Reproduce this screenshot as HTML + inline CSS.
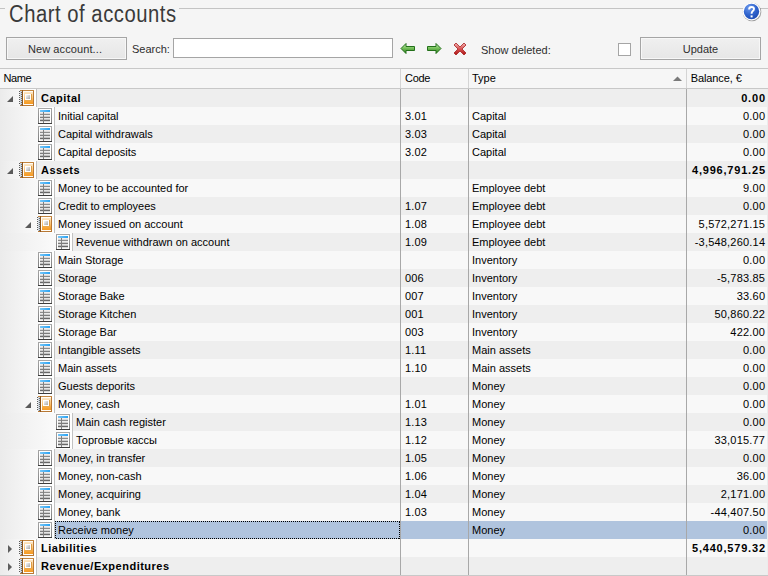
<!DOCTYPE html>
<html><head><meta charset="utf-8">
<style>
html,body{margin:0;padding:0;}
body{width:768px;height:576px;overflow:hidden;position:relative;background:#f5f5f5;font-family:"Liberation Sans",sans-serif;font-size:11px;color:#000;}
.abs{position:absolute;}
.title{position:absolute;left:9px;top:0px;font-size:23px;color:#3a3a3a;white-space:nowrap;line-height:28px;transform:scaleX(0.88);transform-origin:0 0;letter-spacing:0.6px;}
.hl{position:absolute;top:8px;height:1px;background:#c4c4c4;}
.btn{position:absolute;top:37px;height:21px;border:1px solid #a5a5a5;background:linear-gradient(#f0f0f0,#e6e6e6);box-shadow:inset 0 0 0 1px #f7f7f7;color:#2e2e2e;text-align:center;line-height:23px;}
.lbl{position:absolute;color:#2e2e2e;line-height:14px;white-space:nowrap;}
.inp{position:absolute;left:173px;top:38px;width:218px;height:18px;border:1px solid #a5a5a5;background:#fff;}
.chk{position:absolute;left:618px;top:43px;width:11px;height:11px;border:1px solid #a5a5a5;background:#fff;}
.hdr{position:absolute;left:0;top:68px;width:768px;height:19px;border-top:1px solid #c8c8c8;border-bottom:1px solid #c8c8c8;background:#f6f6f6;}
.hdr .t{position:absolute;top:-1px;line-height:20px;}
.hv{position:absolute;top:0;width:1px;height:19px;background:#d4d4d4;}
.r{position:absolute;left:0;width:768px;height:18px;}
.r .t{position:absolute;top:0;line-height:18px;white-space:nowrap;}
.r.b .t{font-weight:bold;letter-spacing:0.5px;}
.r .bal{right:2.8px;letter-spacing:0.2px;}
.r .code{letter-spacing:0.15px;}
.r.b .bal{letter-spacing:0.8px;right:2.2px;}
.ind{position:absolute;left:0;top:0;height:18px;background:linear-gradient(90deg,#ebebeb,#ffffff);}
.isep{position:absolute;top:0;width:1px;height:18px;background:#c2c2c2;}
.tri{position:absolute;top:7px;}
.ico{position:absolute;}
.vl{position:absolute;top:0;width:1px;height:18px;background:#a8a8a8;}
.selc{position:absolute;top:0;height:18px;background:#b0c4de;}
.dh{position:absolute;height:1px;background:repeating-linear-gradient(90deg,#000 0 1px,transparent 1px 2px);}
.dv{position:absolute;width:1px;height:18px;background:repeating-linear-gradient(180deg,#000 0 1px,transparent 1px 2px);}
.selr{position:absolute;top:0;right:0;height:18px;background:#b0c4de;}
</style></head><body>
<svg width="0" height="0" style="position:absolute">
<defs>
<linearGradient id="bk" x1="0" y1="0" x2="0" y2="1"><stop offset="0" stop-color="#fde8c8"/><stop offset="0.5" stop-color="#fbc274"/><stop offset="0.75" stop-color="#f8a83c"/><stop offset="1" stop-color="#f59a22"/></linearGradient>
<linearGradient id="lb" x1="0" y1="0" x2="1" y2="1"><stop offset="0" stop-color="#f8f8f8"/><stop offset="1" stop-color="#a8a8a8"/></linearGradient>
<linearGradient id="tbd" x1="0" y1="0" x2="0" y2="1"><stop offset="0" stop-color="#a8a8a8"/><stop offset="1" stop-color="#7a7a7a"/></linearGradient><linearGradient id="tbb" x1="0" y1="0" x2="1" y2="0"><stop offset="0" stop-color="#76c7f9"/><stop offset="1" stop-color="#28a2f3"/></linearGradient>
</defs></svg>

<div class="hl" style="left:0;width:5px"></div>
<div class="title">Chart of accounts</div>
<div class="hl" style="left:179px;width:570px"></div>
<div class="hl" style="left:755px;width:13px"></div>
<svg class="abs" style="left:741px;top:1px" width="22" height="22">
<defs><radialGradient id="hg" cx="0.35" cy="0.25" r="0.8"><stop offset="0" stop-color="#6a98ec"/><stop offset="0.6" stop-color="#2e62cc"/><stop offset="1" stop-color="#1d4cb4"/></radialGradient></defs>
<circle cx="11" cy="11" r="9.3" fill="#5a5a5a" opacity="0.55"/>
<circle cx="10.5" cy="10.5" r="9" fill="#ffffff"/>
<circle cx="10.5" cy="10.5" r="7.7" fill="url(#hg)"/>
<path d="M8.1 8.5C8.1 6.7 9.2 6 10.6 6C12 6 13 6.9 13 8.1C13 9.3 12.2 9.8 11.4 10.4C10.8 10.9 10.6 11.4 10.6 12.7" fill="none" stroke="#fff" stroke-width="1.9"/>
<rect x="9.6" y="14.4" width="2" height="2" fill="#fff"/>
</svg>

<div class="btn" style="left:6px;width:119px;text-indent:-3px;letter-spacing:0.1px">New account...</div>
<div class="lbl" style="left:132px;top:42px">Search:</div>
<div class="inp"></div>
<svg class="abs" style="left:400px;top:42px" width="16" height="13">
<defs><linearGradient id="ag" x1="0" y1="0" x2="0" y2="1"><stop offset="0" stop-color="#d8f4c8"/><stop offset="0.45" stop-color="#78c25c"/><stop offset="1" stop-color="#2a7c1c"/></linearGradient></defs>
<path d="M1 6.5L6 1.5V4.5H14.5V8.5H6V11.5Z" fill="url(#ag)" stroke="#23701a" stroke-width="1" stroke-linejoin="round"/>
</svg>
<svg class="abs" style="left:426px;top:42px" width="16" height="13">
<path d="M15 6.5L10 1.5V4.5H1.5V8.5H10V11.5Z" fill="url(#ag)" stroke="#23701a" stroke-width="1" stroke-linejoin="round"/>
</svg>
<svg class="abs" style="left:453px;top:42px" width="14" height="14">
<defs><linearGradient id="xg" x1="0" y1="0" x2="0" y2="1"><stop offset="0" stop-color="#f4b8b8"/><stop offset="0.5" stop-color="#d65050"/><stop offset="1" stop-color="#aa1414"/></linearGradient></defs>
<path d="M1 3L3 1L7 5L11 1L13 3L9 7L13 11L11 13L7 9L3 13L1 11L5 7Z" fill="url(#xg)" stroke="#a82020" stroke-width="0.8" stroke-linejoin="round"/>
</svg>
<div class="lbl" style="left:481px;top:43px">Show deleted:</div>
<div class="chk"></div>
<div class="btn" style="left:640px;width:119px">Update</div>

<div class="hdr">
<div class="t" style="left:3.5px;letter-spacing:-0.4px">Name</div>
<div class="hv" style="left:400px"></div>
<div class="t" style="left:405px;letter-spacing:-0.3px">Code</div>
<div class="hv" style="left:468px"></div>
<div class="t" style="left:472px">Type</div>
<svg class="abs" style="left:673px;top:7px" width="9" height="6"><path d="M0 5L4.5 0.5L9 5Z" fill="#7a7a7a"/></svg>
<div class="hv" style="left:686px"></div>
<div class="t" style="left:690.7px;letter-spacing:-0.1px">Balance, €</div>
</div>

<div class="r b" style="top:89px;background:#eeeeee"><div class="ind" style="width:36px"></div><div class="isep" style="left:36px"></div><svg class="tri" style="left:7px" width="6" height="6"><path d="M6 0V6H0Z" fill="#5a5a5a"/></svg><svg class="ico" style="left:19px;top:1px" width="16" height="16" viewBox="0 0 16 16" shape-rendering="crispEdges"><rect x="1" y="0" width="14" height="16" fill="#b87835"/><rect x="1" y="0" width="14" height="1" fill="#c4863f"/><rect x="1" y="1" width="2" height="14" fill="#cdd5dd"/><rect x="3" y="0" width="1" height="16" fill="#8e561c"/><rect x="4" y="1" width="10" height="14" fill="#fffcf6"/><rect x="5" y="2" width="9" height="12" fill="url(#bk)"/><rect x="6" y="4" width="6" height="6" fill="#ffffff"/><rect x="7" y="5" width="4" height="4" fill="url(#lb)"/><rect x="12" y="4" width="1" height="7" fill="#dc9c44"/><rect x="6" y="10" width="7" height="1" fill="#eaa84a"/><g fill="#5a5a5a"><rect x="0" y="1" width="1" height="1"/><rect x="0" y="3" width="1" height="1"/><rect x="0" y="5" width="1" height="1"/><rect x="0" y="7" width="1" height="1"/><rect x="0" y="9" width="1" height="1"/><rect x="0" y="11" width="1" height="1"/><rect x="0" y="13" width="1" height="1"/></g><g fill="#666c72"><rect x="2" y="2" width="1" height="1"/><rect x="2" y="4" width="1" height="1"/><rect x="2" y="6" width="1" height="1"/><rect x="2" y="8" width="1" height="1"/><rect x="2" y="10" width="1" height="1"/><rect x="2" y="12" width="1" height="1"/><rect x="2" y="14" width="1" height="1"/></g></svg><div class="t n" style="left:41px">Capital</div><div class="t bal">0.00</div><div class="vl" style="left:400px"></div><div class="vl" style="left:468px"></div><div class="vl" style="left:686px"></div></div>
<div class="r" style="top:107px;background:#f8f8f8"><div class="ind" style="width:54px"></div><div class="isep" style="left:54px"></div><svg class="ico" style="left:38px;top:1px" width="14" height="16" viewBox="0 0 14 16" shape-rendering="crispEdges"><rect x="0" y="0" width="14" height="16" fill="url(#tbd)"/><rect x="0" y="15" width="14" height="1" fill="#3c3c3c"/><rect x="1" y="1" width="12" height="14" fill="#ffffff"/><rect x="2" y="2" width="10" height="2" fill="url(#tbb)"/><rect x="2" y="4" width="10" height="1" fill="#f2ecea"/><rect x="2" y="5" width="10" height="1" fill="#d9d9d9"/><rect x="2" y="6" width="10" height="1" fill="#8c8c8c"/><rect x="2" y="7" width="10" height="1" fill="#ececec"/><rect x="2" y="8" width="10" height="1" fill="#cdcdcd"/><rect x="2" y="9" width="10" height="1" fill="#7c7c7c"/><rect x="2" y="10" width="10" height="1" fill="#e4e4e4"/><rect x="2" y="11" width="10" height="1" fill="#c2c2c2"/><rect x="2" y="12" width="10" height="1" fill="#686868"/><rect x="2" y="13" width="10" height="1" fill="#dadada"/><rect x="2" y="14" width="10" height="1" fill="#f8f8f8"/><rect x="5" y="4" width="1" height="11" fill="#808080"/></svg><div class="t n" style="left:58px">Initial capital</div><div class="t code" style="left:405px">3.01</div><div class="t" style="left:472px">Capital</div><div class="t bal">0.00</div><div class="vl" style="left:400px"></div><div class="vl" style="left:468px"></div><div class="vl" style="left:686px"></div></div>
<div class="r" style="top:125px;background:#eeeeee"><div class="ind" style="width:54px"></div><div class="isep" style="left:54px"></div><svg class="ico" style="left:38px;top:1px" width="14" height="16" viewBox="0 0 14 16" shape-rendering="crispEdges"><rect x="0" y="0" width="14" height="16" fill="url(#tbd)"/><rect x="0" y="15" width="14" height="1" fill="#3c3c3c"/><rect x="1" y="1" width="12" height="14" fill="#ffffff"/><rect x="2" y="2" width="10" height="2" fill="url(#tbb)"/><rect x="2" y="4" width="10" height="1" fill="#f2ecea"/><rect x="2" y="5" width="10" height="1" fill="#d9d9d9"/><rect x="2" y="6" width="10" height="1" fill="#8c8c8c"/><rect x="2" y="7" width="10" height="1" fill="#ececec"/><rect x="2" y="8" width="10" height="1" fill="#cdcdcd"/><rect x="2" y="9" width="10" height="1" fill="#7c7c7c"/><rect x="2" y="10" width="10" height="1" fill="#e4e4e4"/><rect x="2" y="11" width="10" height="1" fill="#c2c2c2"/><rect x="2" y="12" width="10" height="1" fill="#686868"/><rect x="2" y="13" width="10" height="1" fill="#dadada"/><rect x="2" y="14" width="10" height="1" fill="#f8f8f8"/><rect x="5" y="4" width="1" height="11" fill="#808080"/></svg><div class="t n" style="left:58px">Capital withdrawals</div><div class="t code" style="left:405px">3.03</div><div class="t" style="left:472px">Capital</div><div class="t bal">0.00</div><div class="vl" style="left:400px"></div><div class="vl" style="left:468px"></div><div class="vl" style="left:686px"></div></div>
<div class="r" style="top:143px;background:#f8f8f8"><div class="ind" style="width:54px"></div><div class="isep" style="left:54px"></div><svg class="ico" style="left:38px;top:1px" width="14" height="16" viewBox="0 0 14 16" shape-rendering="crispEdges"><rect x="0" y="0" width="14" height="16" fill="url(#tbd)"/><rect x="0" y="15" width="14" height="1" fill="#3c3c3c"/><rect x="1" y="1" width="12" height="14" fill="#ffffff"/><rect x="2" y="2" width="10" height="2" fill="url(#tbb)"/><rect x="2" y="4" width="10" height="1" fill="#f2ecea"/><rect x="2" y="5" width="10" height="1" fill="#d9d9d9"/><rect x="2" y="6" width="10" height="1" fill="#8c8c8c"/><rect x="2" y="7" width="10" height="1" fill="#ececec"/><rect x="2" y="8" width="10" height="1" fill="#cdcdcd"/><rect x="2" y="9" width="10" height="1" fill="#7c7c7c"/><rect x="2" y="10" width="10" height="1" fill="#e4e4e4"/><rect x="2" y="11" width="10" height="1" fill="#c2c2c2"/><rect x="2" y="12" width="10" height="1" fill="#686868"/><rect x="2" y="13" width="10" height="1" fill="#dadada"/><rect x="2" y="14" width="10" height="1" fill="#f8f8f8"/><rect x="5" y="4" width="1" height="11" fill="#808080"/></svg><div class="t n" style="left:58px">Capital deposits</div><div class="t code" style="left:405px">3.02</div><div class="t" style="left:472px">Capital</div><div class="t bal">0.00</div><div class="vl" style="left:400px"></div><div class="vl" style="left:468px"></div><div class="vl" style="left:686px"></div></div>
<div class="r b" style="top:161px;background:#eeeeee"><div class="ind" style="width:36px"></div><div class="isep" style="left:36px"></div><svg class="tri" style="left:7px" width="6" height="6"><path d="M6 0V6H0Z" fill="#5a5a5a"/></svg><svg class="ico" style="left:19px;top:1px" width="16" height="16" viewBox="0 0 16 16" shape-rendering="crispEdges"><rect x="1" y="0" width="14" height="16" fill="#b87835"/><rect x="1" y="0" width="14" height="1" fill="#c4863f"/><rect x="1" y="1" width="2" height="14" fill="#cdd5dd"/><rect x="3" y="0" width="1" height="16" fill="#8e561c"/><rect x="4" y="1" width="10" height="14" fill="#fffcf6"/><rect x="5" y="2" width="9" height="12" fill="url(#bk)"/><rect x="6" y="4" width="6" height="6" fill="#ffffff"/><rect x="7" y="5" width="4" height="4" fill="url(#lb)"/><rect x="12" y="4" width="1" height="7" fill="#dc9c44"/><rect x="6" y="10" width="7" height="1" fill="#eaa84a"/><g fill="#5a5a5a"><rect x="0" y="1" width="1" height="1"/><rect x="0" y="3" width="1" height="1"/><rect x="0" y="5" width="1" height="1"/><rect x="0" y="7" width="1" height="1"/><rect x="0" y="9" width="1" height="1"/><rect x="0" y="11" width="1" height="1"/><rect x="0" y="13" width="1" height="1"/></g><g fill="#666c72"><rect x="2" y="2" width="1" height="1"/><rect x="2" y="4" width="1" height="1"/><rect x="2" y="6" width="1" height="1"/><rect x="2" y="8" width="1" height="1"/><rect x="2" y="10" width="1" height="1"/><rect x="2" y="12" width="1" height="1"/><rect x="2" y="14" width="1" height="1"/></g></svg><div class="t n" style="left:41px">Assets</div><div class="t bal">4,996,791.25</div><div class="vl" style="left:400px"></div><div class="vl" style="left:468px"></div><div class="vl" style="left:686px"></div></div>
<div class="r" style="top:179px;background:#f8f8f8"><div class="ind" style="width:54px"></div><div class="isep" style="left:54px"></div><svg class="ico" style="left:38px;top:1px" width="14" height="16" viewBox="0 0 14 16" shape-rendering="crispEdges"><rect x="0" y="0" width="14" height="16" fill="url(#tbd)"/><rect x="0" y="15" width="14" height="1" fill="#3c3c3c"/><rect x="1" y="1" width="12" height="14" fill="#ffffff"/><rect x="2" y="2" width="10" height="2" fill="url(#tbb)"/><rect x="2" y="4" width="10" height="1" fill="#f2ecea"/><rect x="2" y="5" width="10" height="1" fill="#d9d9d9"/><rect x="2" y="6" width="10" height="1" fill="#8c8c8c"/><rect x="2" y="7" width="10" height="1" fill="#ececec"/><rect x="2" y="8" width="10" height="1" fill="#cdcdcd"/><rect x="2" y="9" width="10" height="1" fill="#7c7c7c"/><rect x="2" y="10" width="10" height="1" fill="#e4e4e4"/><rect x="2" y="11" width="10" height="1" fill="#c2c2c2"/><rect x="2" y="12" width="10" height="1" fill="#686868"/><rect x="2" y="13" width="10" height="1" fill="#dadada"/><rect x="2" y="14" width="10" height="1" fill="#f8f8f8"/><rect x="5" y="4" width="1" height="11" fill="#808080"/></svg><div class="t n" style="left:58px">Money to be accounted for</div><div class="t" style="left:472px">Employee debt</div><div class="t bal">9.00</div><div class="vl" style="left:400px"></div><div class="vl" style="left:468px"></div><div class="vl" style="left:686px"></div></div>
<div class="r" style="top:197px;background:#eeeeee"><div class="ind" style="width:54px"></div><div class="isep" style="left:54px"></div><svg class="ico" style="left:38px;top:1px" width="14" height="16" viewBox="0 0 14 16" shape-rendering="crispEdges"><rect x="0" y="0" width="14" height="16" fill="url(#tbd)"/><rect x="0" y="15" width="14" height="1" fill="#3c3c3c"/><rect x="1" y="1" width="12" height="14" fill="#ffffff"/><rect x="2" y="2" width="10" height="2" fill="url(#tbb)"/><rect x="2" y="4" width="10" height="1" fill="#f2ecea"/><rect x="2" y="5" width="10" height="1" fill="#d9d9d9"/><rect x="2" y="6" width="10" height="1" fill="#8c8c8c"/><rect x="2" y="7" width="10" height="1" fill="#ececec"/><rect x="2" y="8" width="10" height="1" fill="#cdcdcd"/><rect x="2" y="9" width="10" height="1" fill="#7c7c7c"/><rect x="2" y="10" width="10" height="1" fill="#e4e4e4"/><rect x="2" y="11" width="10" height="1" fill="#c2c2c2"/><rect x="2" y="12" width="10" height="1" fill="#686868"/><rect x="2" y="13" width="10" height="1" fill="#dadada"/><rect x="2" y="14" width="10" height="1" fill="#f8f8f8"/><rect x="5" y="4" width="1" height="11" fill="#808080"/></svg><div class="t n" style="left:58px">Credit to employees</div><div class="t code" style="left:405px">1.07</div><div class="t" style="left:472px">Employee debt</div><div class="t bal">0.00</div><div class="vl" style="left:400px"></div><div class="vl" style="left:468px"></div><div class="vl" style="left:686px"></div></div>
<div class="r" style="top:215px;background:#f8f8f8"><div class="ind" style="width:54px"></div><div class="isep" style="left:54px"></div><svg class="tri" style="left:25px" width="6" height="6"><path d="M6 0V6H0Z" fill="#5a5a5a"/></svg><svg class="ico" style="left:37px;top:1px" width="16" height="16" viewBox="0 0 16 16" shape-rendering="crispEdges"><rect x="1" y="0" width="14" height="16" fill="#b87835"/><rect x="1" y="0" width="14" height="1" fill="#c4863f"/><rect x="1" y="1" width="2" height="14" fill="#cdd5dd"/><rect x="3" y="0" width="1" height="16" fill="#8e561c"/><rect x="4" y="1" width="10" height="14" fill="#fffcf6"/><rect x="5" y="2" width="9" height="12" fill="url(#bk)"/><rect x="6" y="4" width="6" height="6" fill="#ffffff"/><rect x="7" y="5" width="4" height="4" fill="url(#lb)"/><rect x="12" y="4" width="1" height="7" fill="#dc9c44"/><rect x="6" y="10" width="7" height="1" fill="#eaa84a"/><g fill="#5a5a5a"><rect x="0" y="1" width="1" height="1"/><rect x="0" y="3" width="1" height="1"/><rect x="0" y="5" width="1" height="1"/><rect x="0" y="7" width="1" height="1"/><rect x="0" y="9" width="1" height="1"/><rect x="0" y="11" width="1" height="1"/><rect x="0" y="13" width="1" height="1"/></g><g fill="#666c72"><rect x="2" y="2" width="1" height="1"/><rect x="2" y="4" width="1" height="1"/><rect x="2" y="6" width="1" height="1"/><rect x="2" y="8" width="1" height="1"/><rect x="2" y="10" width="1" height="1"/><rect x="2" y="12" width="1" height="1"/><rect x="2" y="14" width="1" height="1"/></g></svg><div class="t n" style="left:58px">Money issued on account</div><div class="t code" style="left:405px">1.08</div><div class="t" style="left:472px">Employee debt</div><div class="t bal">5,572,271.15</div><div class="vl" style="left:400px"></div><div class="vl" style="left:468px"></div><div class="vl" style="left:686px"></div></div>
<div class="r" style="top:233px;background:#eeeeee"><div class="ind" style="width:72px"></div><div class="isep" style="left:72px"></div><svg class="ico" style="left:56px;top:1px" width="14" height="16" viewBox="0 0 14 16" shape-rendering="crispEdges"><rect x="0" y="0" width="14" height="16" fill="url(#tbd)"/><rect x="0" y="15" width="14" height="1" fill="#3c3c3c"/><rect x="1" y="1" width="12" height="14" fill="#ffffff"/><rect x="2" y="2" width="10" height="2" fill="url(#tbb)"/><rect x="2" y="4" width="10" height="1" fill="#f2ecea"/><rect x="2" y="5" width="10" height="1" fill="#d9d9d9"/><rect x="2" y="6" width="10" height="1" fill="#8c8c8c"/><rect x="2" y="7" width="10" height="1" fill="#ececec"/><rect x="2" y="8" width="10" height="1" fill="#cdcdcd"/><rect x="2" y="9" width="10" height="1" fill="#7c7c7c"/><rect x="2" y="10" width="10" height="1" fill="#e4e4e4"/><rect x="2" y="11" width="10" height="1" fill="#c2c2c2"/><rect x="2" y="12" width="10" height="1" fill="#686868"/><rect x="2" y="13" width="10" height="1" fill="#dadada"/><rect x="2" y="14" width="10" height="1" fill="#f8f8f8"/><rect x="5" y="4" width="1" height="11" fill="#808080"/></svg><div class="t n" style="left:76px">Revenue withdrawn on account</div><div class="t code" style="left:405px">1.09</div><div class="t" style="left:472px">Employee debt</div><div class="t bal">-3,548,260.14</div><div class="vl" style="left:400px"></div><div class="vl" style="left:468px"></div><div class="vl" style="left:686px"></div></div>
<div class="r" style="top:251px;background:#f8f8f8"><div class="ind" style="width:54px"></div><div class="isep" style="left:54px"></div><svg class="ico" style="left:38px;top:1px" width="14" height="16" viewBox="0 0 14 16" shape-rendering="crispEdges"><rect x="0" y="0" width="14" height="16" fill="url(#tbd)"/><rect x="0" y="15" width="14" height="1" fill="#3c3c3c"/><rect x="1" y="1" width="12" height="14" fill="#ffffff"/><rect x="2" y="2" width="10" height="2" fill="url(#tbb)"/><rect x="2" y="4" width="10" height="1" fill="#f2ecea"/><rect x="2" y="5" width="10" height="1" fill="#d9d9d9"/><rect x="2" y="6" width="10" height="1" fill="#8c8c8c"/><rect x="2" y="7" width="10" height="1" fill="#ececec"/><rect x="2" y="8" width="10" height="1" fill="#cdcdcd"/><rect x="2" y="9" width="10" height="1" fill="#7c7c7c"/><rect x="2" y="10" width="10" height="1" fill="#e4e4e4"/><rect x="2" y="11" width="10" height="1" fill="#c2c2c2"/><rect x="2" y="12" width="10" height="1" fill="#686868"/><rect x="2" y="13" width="10" height="1" fill="#dadada"/><rect x="2" y="14" width="10" height="1" fill="#f8f8f8"/><rect x="5" y="4" width="1" height="11" fill="#808080"/></svg><div class="t n" style="left:58px">Main Storage</div><div class="t" style="left:472px">Inventory</div><div class="t bal">0.00</div><div class="vl" style="left:400px"></div><div class="vl" style="left:468px"></div><div class="vl" style="left:686px"></div></div>
<div class="r" style="top:269px;background:#eeeeee"><div class="ind" style="width:54px"></div><div class="isep" style="left:54px"></div><svg class="ico" style="left:38px;top:1px" width="14" height="16" viewBox="0 0 14 16" shape-rendering="crispEdges"><rect x="0" y="0" width="14" height="16" fill="url(#tbd)"/><rect x="0" y="15" width="14" height="1" fill="#3c3c3c"/><rect x="1" y="1" width="12" height="14" fill="#ffffff"/><rect x="2" y="2" width="10" height="2" fill="url(#tbb)"/><rect x="2" y="4" width="10" height="1" fill="#f2ecea"/><rect x="2" y="5" width="10" height="1" fill="#d9d9d9"/><rect x="2" y="6" width="10" height="1" fill="#8c8c8c"/><rect x="2" y="7" width="10" height="1" fill="#ececec"/><rect x="2" y="8" width="10" height="1" fill="#cdcdcd"/><rect x="2" y="9" width="10" height="1" fill="#7c7c7c"/><rect x="2" y="10" width="10" height="1" fill="#e4e4e4"/><rect x="2" y="11" width="10" height="1" fill="#c2c2c2"/><rect x="2" y="12" width="10" height="1" fill="#686868"/><rect x="2" y="13" width="10" height="1" fill="#dadada"/><rect x="2" y="14" width="10" height="1" fill="#f8f8f8"/><rect x="5" y="4" width="1" height="11" fill="#808080"/></svg><div class="t n" style="left:58px">Storage</div><div class="t code" style="left:405px">006</div><div class="t" style="left:472px">Inventory</div><div class="t bal">-5,783.85</div><div class="vl" style="left:400px"></div><div class="vl" style="left:468px"></div><div class="vl" style="left:686px"></div></div>
<div class="r" style="top:287px;background:#f8f8f8"><div class="ind" style="width:54px"></div><div class="isep" style="left:54px"></div><svg class="ico" style="left:38px;top:1px" width="14" height="16" viewBox="0 0 14 16" shape-rendering="crispEdges"><rect x="0" y="0" width="14" height="16" fill="url(#tbd)"/><rect x="0" y="15" width="14" height="1" fill="#3c3c3c"/><rect x="1" y="1" width="12" height="14" fill="#ffffff"/><rect x="2" y="2" width="10" height="2" fill="url(#tbb)"/><rect x="2" y="4" width="10" height="1" fill="#f2ecea"/><rect x="2" y="5" width="10" height="1" fill="#d9d9d9"/><rect x="2" y="6" width="10" height="1" fill="#8c8c8c"/><rect x="2" y="7" width="10" height="1" fill="#ececec"/><rect x="2" y="8" width="10" height="1" fill="#cdcdcd"/><rect x="2" y="9" width="10" height="1" fill="#7c7c7c"/><rect x="2" y="10" width="10" height="1" fill="#e4e4e4"/><rect x="2" y="11" width="10" height="1" fill="#c2c2c2"/><rect x="2" y="12" width="10" height="1" fill="#686868"/><rect x="2" y="13" width="10" height="1" fill="#dadada"/><rect x="2" y="14" width="10" height="1" fill="#f8f8f8"/><rect x="5" y="4" width="1" height="11" fill="#808080"/></svg><div class="t n" style="left:58px">Storage Bake</div><div class="t code" style="left:405px">007</div><div class="t" style="left:472px">Inventory</div><div class="t bal">33.60</div><div class="vl" style="left:400px"></div><div class="vl" style="left:468px"></div><div class="vl" style="left:686px"></div></div>
<div class="r" style="top:305px;background:#eeeeee"><div class="ind" style="width:54px"></div><div class="isep" style="left:54px"></div><svg class="ico" style="left:38px;top:1px" width="14" height="16" viewBox="0 0 14 16" shape-rendering="crispEdges"><rect x="0" y="0" width="14" height="16" fill="url(#tbd)"/><rect x="0" y="15" width="14" height="1" fill="#3c3c3c"/><rect x="1" y="1" width="12" height="14" fill="#ffffff"/><rect x="2" y="2" width="10" height="2" fill="url(#tbb)"/><rect x="2" y="4" width="10" height="1" fill="#f2ecea"/><rect x="2" y="5" width="10" height="1" fill="#d9d9d9"/><rect x="2" y="6" width="10" height="1" fill="#8c8c8c"/><rect x="2" y="7" width="10" height="1" fill="#ececec"/><rect x="2" y="8" width="10" height="1" fill="#cdcdcd"/><rect x="2" y="9" width="10" height="1" fill="#7c7c7c"/><rect x="2" y="10" width="10" height="1" fill="#e4e4e4"/><rect x="2" y="11" width="10" height="1" fill="#c2c2c2"/><rect x="2" y="12" width="10" height="1" fill="#686868"/><rect x="2" y="13" width="10" height="1" fill="#dadada"/><rect x="2" y="14" width="10" height="1" fill="#f8f8f8"/><rect x="5" y="4" width="1" height="11" fill="#808080"/></svg><div class="t n" style="left:58px">Storage Kitchen</div><div class="t code" style="left:405px">001</div><div class="t" style="left:472px">Inventory</div><div class="t bal">50,860.22</div><div class="vl" style="left:400px"></div><div class="vl" style="left:468px"></div><div class="vl" style="left:686px"></div></div>
<div class="r" style="top:323px;background:#f8f8f8"><div class="ind" style="width:54px"></div><div class="isep" style="left:54px"></div><svg class="ico" style="left:38px;top:1px" width="14" height="16" viewBox="0 0 14 16" shape-rendering="crispEdges"><rect x="0" y="0" width="14" height="16" fill="url(#tbd)"/><rect x="0" y="15" width="14" height="1" fill="#3c3c3c"/><rect x="1" y="1" width="12" height="14" fill="#ffffff"/><rect x="2" y="2" width="10" height="2" fill="url(#tbb)"/><rect x="2" y="4" width="10" height="1" fill="#f2ecea"/><rect x="2" y="5" width="10" height="1" fill="#d9d9d9"/><rect x="2" y="6" width="10" height="1" fill="#8c8c8c"/><rect x="2" y="7" width="10" height="1" fill="#ececec"/><rect x="2" y="8" width="10" height="1" fill="#cdcdcd"/><rect x="2" y="9" width="10" height="1" fill="#7c7c7c"/><rect x="2" y="10" width="10" height="1" fill="#e4e4e4"/><rect x="2" y="11" width="10" height="1" fill="#c2c2c2"/><rect x="2" y="12" width="10" height="1" fill="#686868"/><rect x="2" y="13" width="10" height="1" fill="#dadada"/><rect x="2" y="14" width="10" height="1" fill="#f8f8f8"/><rect x="5" y="4" width="1" height="11" fill="#808080"/></svg><div class="t n" style="left:58px">Storage Bar</div><div class="t code" style="left:405px">003</div><div class="t" style="left:472px">Inventory</div><div class="t bal">422.00</div><div class="vl" style="left:400px"></div><div class="vl" style="left:468px"></div><div class="vl" style="left:686px"></div></div>
<div class="r" style="top:341px;background:#eeeeee"><div class="ind" style="width:54px"></div><div class="isep" style="left:54px"></div><svg class="ico" style="left:38px;top:1px" width="14" height="16" viewBox="0 0 14 16" shape-rendering="crispEdges"><rect x="0" y="0" width="14" height="16" fill="url(#tbd)"/><rect x="0" y="15" width="14" height="1" fill="#3c3c3c"/><rect x="1" y="1" width="12" height="14" fill="#ffffff"/><rect x="2" y="2" width="10" height="2" fill="url(#tbb)"/><rect x="2" y="4" width="10" height="1" fill="#f2ecea"/><rect x="2" y="5" width="10" height="1" fill="#d9d9d9"/><rect x="2" y="6" width="10" height="1" fill="#8c8c8c"/><rect x="2" y="7" width="10" height="1" fill="#ececec"/><rect x="2" y="8" width="10" height="1" fill="#cdcdcd"/><rect x="2" y="9" width="10" height="1" fill="#7c7c7c"/><rect x="2" y="10" width="10" height="1" fill="#e4e4e4"/><rect x="2" y="11" width="10" height="1" fill="#c2c2c2"/><rect x="2" y="12" width="10" height="1" fill="#686868"/><rect x="2" y="13" width="10" height="1" fill="#dadada"/><rect x="2" y="14" width="10" height="1" fill="#f8f8f8"/><rect x="5" y="4" width="1" height="11" fill="#808080"/></svg><div class="t n" style="left:58px">Intangible assets</div><div class="t code" style="left:405px">1.11</div><div class="t" style="left:472px">Main assets</div><div class="t bal">0.00</div><div class="vl" style="left:400px"></div><div class="vl" style="left:468px"></div><div class="vl" style="left:686px"></div></div>
<div class="r" style="top:359px;background:#f8f8f8"><div class="ind" style="width:54px"></div><div class="isep" style="left:54px"></div><svg class="ico" style="left:38px;top:1px" width="14" height="16" viewBox="0 0 14 16" shape-rendering="crispEdges"><rect x="0" y="0" width="14" height="16" fill="url(#tbd)"/><rect x="0" y="15" width="14" height="1" fill="#3c3c3c"/><rect x="1" y="1" width="12" height="14" fill="#ffffff"/><rect x="2" y="2" width="10" height="2" fill="url(#tbb)"/><rect x="2" y="4" width="10" height="1" fill="#f2ecea"/><rect x="2" y="5" width="10" height="1" fill="#d9d9d9"/><rect x="2" y="6" width="10" height="1" fill="#8c8c8c"/><rect x="2" y="7" width="10" height="1" fill="#ececec"/><rect x="2" y="8" width="10" height="1" fill="#cdcdcd"/><rect x="2" y="9" width="10" height="1" fill="#7c7c7c"/><rect x="2" y="10" width="10" height="1" fill="#e4e4e4"/><rect x="2" y="11" width="10" height="1" fill="#c2c2c2"/><rect x="2" y="12" width="10" height="1" fill="#686868"/><rect x="2" y="13" width="10" height="1" fill="#dadada"/><rect x="2" y="14" width="10" height="1" fill="#f8f8f8"/><rect x="5" y="4" width="1" height="11" fill="#808080"/></svg><div class="t n" style="left:58px">Main assets</div><div class="t code" style="left:405px">1.10</div><div class="t" style="left:472px">Main assets</div><div class="t bal">0.00</div><div class="vl" style="left:400px"></div><div class="vl" style="left:468px"></div><div class="vl" style="left:686px"></div></div>
<div class="r" style="top:377px;background:#eeeeee"><div class="ind" style="width:54px"></div><div class="isep" style="left:54px"></div><svg class="ico" style="left:38px;top:1px" width="14" height="16" viewBox="0 0 14 16" shape-rendering="crispEdges"><rect x="0" y="0" width="14" height="16" fill="url(#tbd)"/><rect x="0" y="15" width="14" height="1" fill="#3c3c3c"/><rect x="1" y="1" width="12" height="14" fill="#ffffff"/><rect x="2" y="2" width="10" height="2" fill="url(#tbb)"/><rect x="2" y="4" width="10" height="1" fill="#f2ecea"/><rect x="2" y="5" width="10" height="1" fill="#d9d9d9"/><rect x="2" y="6" width="10" height="1" fill="#8c8c8c"/><rect x="2" y="7" width="10" height="1" fill="#ececec"/><rect x="2" y="8" width="10" height="1" fill="#cdcdcd"/><rect x="2" y="9" width="10" height="1" fill="#7c7c7c"/><rect x="2" y="10" width="10" height="1" fill="#e4e4e4"/><rect x="2" y="11" width="10" height="1" fill="#c2c2c2"/><rect x="2" y="12" width="10" height="1" fill="#686868"/><rect x="2" y="13" width="10" height="1" fill="#dadada"/><rect x="2" y="14" width="10" height="1" fill="#f8f8f8"/><rect x="5" y="4" width="1" height="11" fill="#808080"/></svg><div class="t n" style="left:58px">Guests deporits</div><div class="t" style="left:472px">Money</div><div class="t bal">0.00</div><div class="vl" style="left:400px"></div><div class="vl" style="left:468px"></div><div class="vl" style="left:686px"></div></div>
<div class="r" style="top:395px;background:#f8f8f8"><div class="ind" style="width:54px"></div><div class="isep" style="left:54px"></div><svg class="tri" style="left:25px" width="6" height="6"><path d="M6 0V6H0Z" fill="#5a5a5a"/></svg><svg class="ico" style="left:37px;top:1px" width="16" height="16" viewBox="0 0 16 16" shape-rendering="crispEdges"><rect x="1" y="0" width="14" height="16" fill="#b87835"/><rect x="1" y="0" width="14" height="1" fill="#c4863f"/><rect x="1" y="1" width="2" height="14" fill="#cdd5dd"/><rect x="3" y="0" width="1" height="16" fill="#8e561c"/><rect x="4" y="1" width="10" height="14" fill="#fffcf6"/><rect x="5" y="2" width="9" height="12" fill="url(#bk)"/><rect x="6" y="4" width="6" height="6" fill="#ffffff"/><rect x="7" y="5" width="4" height="4" fill="url(#lb)"/><rect x="12" y="4" width="1" height="7" fill="#dc9c44"/><rect x="6" y="10" width="7" height="1" fill="#eaa84a"/><g fill="#5a5a5a"><rect x="0" y="1" width="1" height="1"/><rect x="0" y="3" width="1" height="1"/><rect x="0" y="5" width="1" height="1"/><rect x="0" y="7" width="1" height="1"/><rect x="0" y="9" width="1" height="1"/><rect x="0" y="11" width="1" height="1"/><rect x="0" y="13" width="1" height="1"/></g><g fill="#666c72"><rect x="2" y="2" width="1" height="1"/><rect x="2" y="4" width="1" height="1"/><rect x="2" y="6" width="1" height="1"/><rect x="2" y="8" width="1" height="1"/><rect x="2" y="10" width="1" height="1"/><rect x="2" y="12" width="1" height="1"/><rect x="2" y="14" width="1" height="1"/></g></svg><div class="t n" style="left:58px">Money, cash</div><div class="t code" style="left:405px">1.01</div><div class="t" style="left:472px">Money</div><div class="t bal">0.00</div><div class="vl" style="left:400px"></div><div class="vl" style="left:468px"></div><div class="vl" style="left:686px"></div></div>
<div class="r" style="top:413px;background:#eeeeee"><div class="ind" style="width:72px"></div><div class="isep" style="left:72px"></div><svg class="ico" style="left:56px;top:1px" width="14" height="16" viewBox="0 0 14 16" shape-rendering="crispEdges"><rect x="0" y="0" width="14" height="16" fill="url(#tbd)"/><rect x="0" y="15" width="14" height="1" fill="#3c3c3c"/><rect x="1" y="1" width="12" height="14" fill="#ffffff"/><rect x="2" y="2" width="10" height="2" fill="url(#tbb)"/><rect x="2" y="4" width="10" height="1" fill="#f2ecea"/><rect x="2" y="5" width="10" height="1" fill="#d9d9d9"/><rect x="2" y="6" width="10" height="1" fill="#8c8c8c"/><rect x="2" y="7" width="10" height="1" fill="#ececec"/><rect x="2" y="8" width="10" height="1" fill="#cdcdcd"/><rect x="2" y="9" width="10" height="1" fill="#7c7c7c"/><rect x="2" y="10" width="10" height="1" fill="#e4e4e4"/><rect x="2" y="11" width="10" height="1" fill="#c2c2c2"/><rect x="2" y="12" width="10" height="1" fill="#686868"/><rect x="2" y="13" width="10" height="1" fill="#dadada"/><rect x="2" y="14" width="10" height="1" fill="#f8f8f8"/><rect x="5" y="4" width="1" height="11" fill="#808080"/></svg><div class="t n" style="left:76px">Main cash register</div><div class="t code" style="left:405px">1.13</div><div class="t" style="left:472px">Money</div><div class="t bal">0.00</div><div class="vl" style="left:400px"></div><div class="vl" style="left:468px"></div><div class="vl" style="left:686px"></div></div>
<div class="r" style="top:431px;background:#f8f8f8"><div class="ind" style="width:72px"></div><div class="isep" style="left:72px"></div><svg class="ico" style="left:56px;top:1px" width="14" height="16" viewBox="0 0 14 16" shape-rendering="crispEdges"><rect x="0" y="0" width="14" height="16" fill="url(#tbd)"/><rect x="0" y="15" width="14" height="1" fill="#3c3c3c"/><rect x="1" y="1" width="12" height="14" fill="#ffffff"/><rect x="2" y="2" width="10" height="2" fill="url(#tbb)"/><rect x="2" y="4" width="10" height="1" fill="#f2ecea"/><rect x="2" y="5" width="10" height="1" fill="#d9d9d9"/><rect x="2" y="6" width="10" height="1" fill="#8c8c8c"/><rect x="2" y="7" width="10" height="1" fill="#ececec"/><rect x="2" y="8" width="10" height="1" fill="#cdcdcd"/><rect x="2" y="9" width="10" height="1" fill="#7c7c7c"/><rect x="2" y="10" width="10" height="1" fill="#e4e4e4"/><rect x="2" y="11" width="10" height="1" fill="#c2c2c2"/><rect x="2" y="12" width="10" height="1" fill="#686868"/><rect x="2" y="13" width="10" height="1" fill="#dadada"/><rect x="2" y="14" width="10" height="1" fill="#f8f8f8"/><rect x="5" y="4" width="1" height="11" fill="#808080"/></svg><div class="t n" style="left:76px">Торговые кассы</div><div class="t code" style="left:405px">1.12</div><div class="t" style="left:472px">Money</div><div class="t bal">33,015.77</div><div class="vl" style="left:400px"></div><div class="vl" style="left:468px"></div><div class="vl" style="left:686px"></div></div>
<div class="r" style="top:449px;background:#eeeeee"><div class="ind" style="width:54px"></div><div class="isep" style="left:54px"></div><svg class="ico" style="left:38px;top:1px" width="14" height="16" viewBox="0 0 14 16" shape-rendering="crispEdges"><rect x="0" y="0" width="14" height="16" fill="url(#tbd)"/><rect x="0" y="15" width="14" height="1" fill="#3c3c3c"/><rect x="1" y="1" width="12" height="14" fill="#ffffff"/><rect x="2" y="2" width="10" height="2" fill="url(#tbb)"/><rect x="2" y="4" width="10" height="1" fill="#f2ecea"/><rect x="2" y="5" width="10" height="1" fill="#d9d9d9"/><rect x="2" y="6" width="10" height="1" fill="#8c8c8c"/><rect x="2" y="7" width="10" height="1" fill="#ececec"/><rect x="2" y="8" width="10" height="1" fill="#cdcdcd"/><rect x="2" y="9" width="10" height="1" fill="#7c7c7c"/><rect x="2" y="10" width="10" height="1" fill="#e4e4e4"/><rect x="2" y="11" width="10" height="1" fill="#c2c2c2"/><rect x="2" y="12" width="10" height="1" fill="#686868"/><rect x="2" y="13" width="10" height="1" fill="#dadada"/><rect x="2" y="14" width="10" height="1" fill="#f8f8f8"/><rect x="5" y="4" width="1" height="11" fill="#808080"/></svg><div class="t n" style="left:58px">Money, in transfer</div><div class="t code" style="left:405px">1.05</div><div class="t" style="left:472px">Money</div><div class="t bal">0.00</div><div class="vl" style="left:400px"></div><div class="vl" style="left:468px"></div><div class="vl" style="left:686px"></div></div>
<div class="r" style="top:467px;background:#f8f8f8"><div class="ind" style="width:54px"></div><div class="isep" style="left:54px"></div><svg class="ico" style="left:38px;top:1px" width="14" height="16" viewBox="0 0 14 16" shape-rendering="crispEdges"><rect x="0" y="0" width="14" height="16" fill="url(#tbd)"/><rect x="0" y="15" width="14" height="1" fill="#3c3c3c"/><rect x="1" y="1" width="12" height="14" fill="#ffffff"/><rect x="2" y="2" width="10" height="2" fill="url(#tbb)"/><rect x="2" y="4" width="10" height="1" fill="#f2ecea"/><rect x="2" y="5" width="10" height="1" fill="#d9d9d9"/><rect x="2" y="6" width="10" height="1" fill="#8c8c8c"/><rect x="2" y="7" width="10" height="1" fill="#ececec"/><rect x="2" y="8" width="10" height="1" fill="#cdcdcd"/><rect x="2" y="9" width="10" height="1" fill="#7c7c7c"/><rect x="2" y="10" width="10" height="1" fill="#e4e4e4"/><rect x="2" y="11" width="10" height="1" fill="#c2c2c2"/><rect x="2" y="12" width="10" height="1" fill="#686868"/><rect x="2" y="13" width="10" height="1" fill="#dadada"/><rect x="2" y="14" width="10" height="1" fill="#f8f8f8"/><rect x="5" y="4" width="1" height="11" fill="#808080"/></svg><div class="t n" style="left:58px">Money, non-cash</div><div class="t code" style="left:405px">1.06</div><div class="t" style="left:472px">Money</div><div class="t bal">36.00</div><div class="vl" style="left:400px"></div><div class="vl" style="left:468px"></div><div class="vl" style="left:686px"></div></div>
<div class="r" style="top:485px;background:#eeeeee"><div class="ind" style="width:54px"></div><div class="isep" style="left:54px"></div><svg class="ico" style="left:38px;top:1px" width="14" height="16" viewBox="0 0 14 16" shape-rendering="crispEdges"><rect x="0" y="0" width="14" height="16" fill="url(#tbd)"/><rect x="0" y="15" width="14" height="1" fill="#3c3c3c"/><rect x="1" y="1" width="12" height="14" fill="#ffffff"/><rect x="2" y="2" width="10" height="2" fill="url(#tbb)"/><rect x="2" y="4" width="10" height="1" fill="#f2ecea"/><rect x="2" y="5" width="10" height="1" fill="#d9d9d9"/><rect x="2" y="6" width="10" height="1" fill="#8c8c8c"/><rect x="2" y="7" width="10" height="1" fill="#ececec"/><rect x="2" y="8" width="10" height="1" fill="#cdcdcd"/><rect x="2" y="9" width="10" height="1" fill="#7c7c7c"/><rect x="2" y="10" width="10" height="1" fill="#e4e4e4"/><rect x="2" y="11" width="10" height="1" fill="#c2c2c2"/><rect x="2" y="12" width="10" height="1" fill="#686868"/><rect x="2" y="13" width="10" height="1" fill="#dadada"/><rect x="2" y="14" width="10" height="1" fill="#f8f8f8"/><rect x="5" y="4" width="1" height="11" fill="#808080"/></svg><div class="t n" style="left:58px">Money, acquiring</div><div class="t code" style="left:405px">1.04</div><div class="t" style="left:472px">Money</div><div class="t bal">2,171.00</div><div class="vl" style="left:400px"></div><div class="vl" style="left:468px"></div><div class="vl" style="left:686px"></div></div>
<div class="r" style="top:503px;background:#f8f8f8"><div class="ind" style="width:54px"></div><div class="isep" style="left:54px"></div><svg class="ico" style="left:38px;top:1px" width="14" height="16" viewBox="0 0 14 16" shape-rendering="crispEdges"><rect x="0" y="0" width="14" height="16" fill="url(#tbd)"/><rect x="0" y="15" width="14" height="1" fill="#3c3c3c"/><rect x="1" y="1" width="12" height="14" fill="#ffffff"/><rect x="2" y="2" width="10" height="2" fill="url(#tbb)"/><rect x="2" y="4" width="10" height="1" fill="#f2ecea"/><rect x="2" y="5" width="10" height="1" fill="#d9d9d9"/><rect x="2" y="6" width="10" height="1" fill="#8c8c8c"/><rect x="2" y="7" width="10" height="1" fill="#ececec"/><rect x="2" y="8" width="10" height="1" fill="#cdcdcd"/><rect x="2" y="9" width="10" height="1" fill="#7c7c7c"/><rect x="2" y="10" width="10" height="1" fill="#e4e4e4"/><rect x="2" y="11" width="10" height="1" fill="#c2c2c2"/><rect x="2" y="12" width="10" height="1" fill="#686868"/><rect x="2" y="13" width="10" height="1" fill="#dadada"/><rect x="2" y="14" width="10" height="1" fill="#f8f8f8"/><rect x="5" y="4" width="1" height="11" fill="#808080"/></svg><div class="t n" style="left:58px">Money, bank</div><div class="t code" style="left:405px">1.03</div><div class="t" style="left:472px">Money</div><div class="t bal">-44,407.50</div><div class="vl" style="left:400px"></div><div class="vl" style="left:468px"></div><div class="vl" style="left:686px"></div></div>
<div class="r" style="top:521px;background:#eeeeee"><div class="ind" style="width:54px"></div><div class="isep" style="left:54px"></div><svg class="ico" style="left:38px;top:1px" width="14" height="16" viewBox="0 0 14 16" shape-rendering="crispEdges"><rect x="0" y="0" width="14" height="16" fill="url(#tbd)"/><rect x="0" y="15" width="14" height="1" fill="#3c3c3c"/><rect x="1" y="1" width="12" height="14" fill="#ffffff"/><rect x="2" y="2" width="10" height="2" fill="url(#tbb)"/><rect x="2" y="4" width="10" height="1" fill="#f2ecea"/><rect x="2" y="5" width="10" height="1" fill="#d9d9d9"/><rect x="2" y="6" width="10" height="1" fill="#8c8c8c"/><rect x="2" y="7" width="10" height="1" fill="#ececec"/><rect x="2" y="8" width="10" height="1" fill="#cdcdcd"/><rect x="2" y="9" width="10" height="1" fill="#7c7c7c"/><rect x="2" y="10" width="10" height="1" fill="#e4e4e4"/><rect x="2" y="11" width="10" height="1" fill="#c2c2c2"/><rect x="2" y="12" width="10" height="1" fill="#686868"/><rect x="2" y="13" width="10" height="1" fill="#dadada"/><rect x="2" y="14" width="10" height="1" fill="#f8f8f8"/><rect x="5" y="4" width="1" height="11" fill="#808080"/></svg><div class="selc" style="left:55px;width:345px"></div><div class="selr" style="left:401px"></div><div class="dh" style="left:55px;top:0;width:345px"></div><div class="dh" style="left:56px;top:17px;width:344px"></div><div class="dv" style="left:55px;top:0"></div><div class="dv" style="left:399px;top:1px"></div><div class="t n" style="left:58px">Receive money</div><div class="t" style="left:472px">Money</div><div class="t bal">0.00</div><div class="vl" style="left:400px"></div><div class="vl" style="left:468px"></div><div class="vl" style="left:686px"></div></div>
<div class="r b" style="top:539px;background:#f8f8f8"><div class="ind" style="width:36px"></div><div class="isep" style="left:36px"></div><svg class="tri" style="left:8px;top:6px" width="5" height="8"><path d="M0 0L4 4L0 8Z" fill="#5e5e5e"/></svg><svg class="ico" style="left:19px;top:1px" width="16" height="16" viewBox="0 0 16 16" shape-rendering="crispEdges"><rect x="1" y="0" width="14" height="16" fill="#b87835"/><rect x="1" y="0" width="14" height="1" fill="#c4863f"/><rect x="1" y="1" width="2" height="14" fill="#cdd5dd"/><rect x="3" y="0" width="1" height="16" fill="#8e561c"/><rect x="4" y="1" width="10" height="14" fill="#fffcf6"/><rect x="5" y="2" width="9" height="12" fill="url(#bk)"/><rect x="6" y="4" width="6" height="6" fill="#ffffff"/><rect x="7" y="5" width="4" height="4" fill="url(#lb)"/><rect x="12" y="4" width="1" height="7" fill="#dc9c44"/><rect x="6" y="10" width="7" height="1" fill="#eaa84a"/><g fill="#5a5a5a"><rect x="0" y="1" width="1" height="1"/><rect x="0" y="3" width="1" height="1"/><rect x="0" y="5" width="1" height="1"/><rect x="0" y="7" width="1" height="1"/><rect x="0" y="9" width="1" height="1"/><rect x="0" y="11" width="1" height="1"/><rect x="0" y="13" width="1" height="1"/></g><g fill="#666c72"><rect x="2" y="2" width="1" height="1"/><rect x="2" y="4" width="1" height="1"/><rect x="2" y="6" width="1" height="1"/><rect x="2" y="8" width="1" height="1"/><rect x="2" y="10" width="1" height="1"/><rect x="2" y="12" width="1" height="1"/><rect x="2" y="14" width="1" height="1"/></g></svg><div class="t n" style="left:41px">Liabilities</div><div class="t bal">5,440,579.32</div><div class="vl" style="left:400px"></div><div class="vl" style="left:468px"></div><div class="vl" style="left:686px"></div></div>
<div class="r b" style="top:557px;background:#eeeeee"><div class="ind" style="width:36px"></div><div class="isep" style="left:36px"></div><svg class="tri" style="left:8px;top:6px" width="5" height="8"><path d="M0 0L4 4L0 8Z" fill="#5e5e5e"/></svg><svg class="ico" style="left:19px;top:1px" width="16" height="16" viewBox="0 0 16 16" shape-rendering="crispEdges"><rect x="1" y="0" width="14" height="16" fill="#b87835"/><rect x="1" y="0" width="14" height="1" fill="#c4863f"/><rect x="1" y="1" width="2" height="14" fill="#cdd5dd"/><rect x="3" y="0" width="1" height="16" fill="#8e561c"/><rect x="4" y="1" width="10" height="14" fill="#fffcf6"/><rect x="5" y="2" width="9" height="12" fill="url(#bk)"/><rect x="6" y="4" width="6" height="6" fill="#ffffff"/><rect x="7" y="5" width="4" height="4" fill="url(#lb)"/><rect x="12" y="4" width="1" height="7" fill="#dc9c44"/><rect x="6" y="10" width="7" height="1" fill="#eaa84a"/><g fill="#5a5a5a"><rect x="0" y="1" width="1" height="1"/><rect x="0" y="3" width="1" height="1"/><rect x="0" y="5" width="1" height="1"/><rect x="0" y="7" width="1" height="1"/><rect x="0" y="9" width="1" height="1"/><rect x="0" y="11" width="1" height="1"/><rect x="0" y="13" width="1" height="1"/></g><g fill="#666c72"><rect x="2" y="2" width="1" height="1"/><rect x="2" y="4" width="1" height="1"/><rect x="2" y="6" width="1" height="1"/><rect x="2" y="8" width="1" height="1"/><rect x="2" y="10" width="1" height="1"/><rect x="2" y="12" width="1" height="1"/><rect x="2" y="14" width="1" height="1"/></g></svg><div class="t n" style="left:41px">Revenue/Expenditures</div><div class="vl" style="left:400px"></div><div class="vl" style="left:468px"></div><div class="vl" style="left:686px"></div></div>
<div class="abs" style="left:0;top:575px;width:768px;height:1px;background:#c8c8c8"></div>
<div class="abs" style="left:767px;top:89px;width:1px;height:486px;background:#ececec"></div>
</body></html>
